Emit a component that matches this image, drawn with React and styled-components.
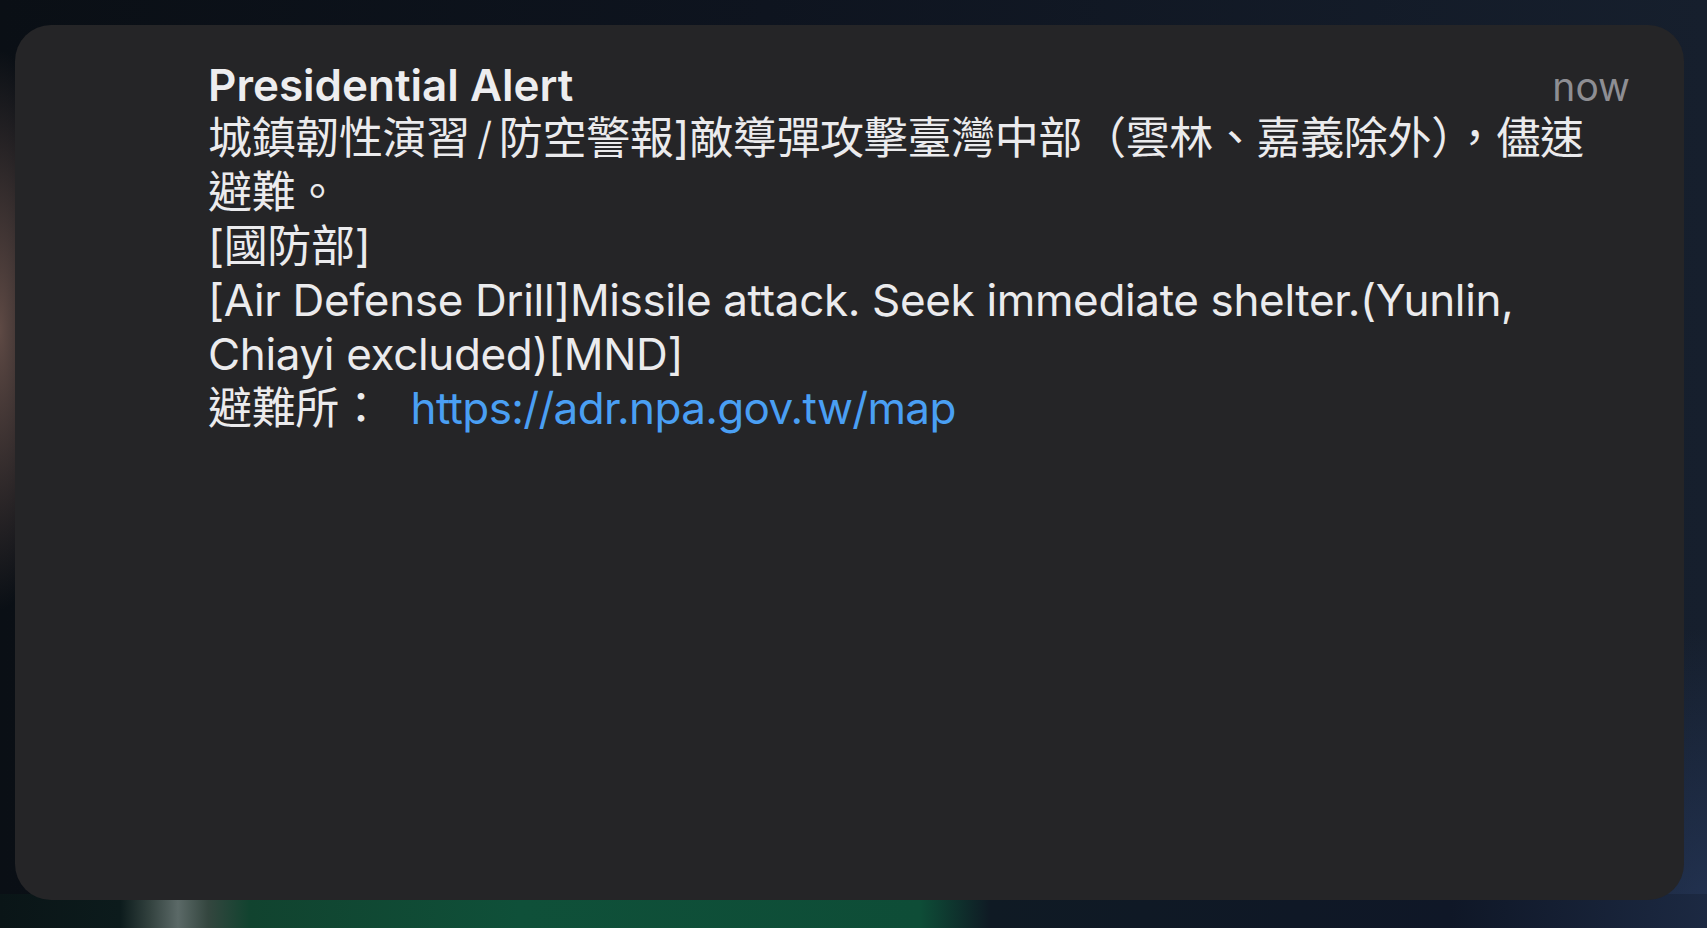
import React from 'react';
import styled, { createGlobalStyle } from 'styled-components';

const GlobalStyle = createGlobalStyle`
  html, body {
    margin: 0;
    padding: 0;
    height: 100%;
  }
  body {
    font-family: Inter, 'Noto Sans CJK TC', sans-serif;
    background-color: #0d131c;
    background-image:
      linear-gradient(90deg, #0a1517 0px, #0c1b1c 120px, #33423f 150px, #5b6967 178px, #34463f 208px, #11432f 250px, #0f5039 520px, #0e4d37 920px, #0f1a24 990px, #0f1727 1450px, #1c2942 1707px),
      radial-gradient(ellipse 60px 280px at 0px 330px, rgba(115, 88, 80, 0.8), rgba(115, 88, 80, 0) 100%),
      radial-gradient(ellipse 160px 300px at 1707px 928px, rgba(38, 56, 92, 0.8), rgba(38, 56, 92, 0) 100%),
      linear-gradient(90deg, #0a0f15 0%, #0e141f 45%, #161f2d 100%);
    background-size: 100% 34px, auto, auto, auto;
    background-position: left bottom, 0 0, 0 0, 0 0;
    background-repeat: no-repeat;
  }
`;

const Screen = styled.div`
  box-sizing: border-box;
  min-height: 100vh;
  display: flex;
  flex-direction: column;
  padding: 25px 23px 28px 15px;
`;

const Card = styled.section`
  flex: 1;
  display: flex;
  flex-direction: column;
  background: #252527;
  border-radius: 36px;
  padding: 34px 54px 0 193px;
  color: #ebebed;
`;

const Header = styled.header`
  display: flex;
  justify-content: space-between;
  align-items: baseline;
`;

const Title = styled.h1`
  margin: 0;
  font-size: 44px;
  line-height: 52px;
  font-weight: 600;
  letter-spacing: 0;
  color: #ededef;
`;

const Time = styled.span`
  font-size: 39px;
  font-weight: 400;
  color: #8e8e93;
`;

const Message = styled.div`
  max-width: 1412px;
  font-size: 44px;
  line-height: 54px;
  font-weight: 400;
  letter-spacing: -0.008em;
`;

const Line = styled.div`
  white-space: normal;
`;

const Slash = styled.span`
  margin: 0 7px;
  font-weight: 300;
`;

const Link = styled.a`
  color: #4a9ff3;
  text-decoration: none;
  margin-left: 28px;
  letter-spacing: -0.015em;
`;

export default function App() {
  return (
    <>
      <GlobalStyle />
      <Screen>
        <Card>
          <Header>
            <Title>Presidential Alert</Title>
            <Time>now</Time>
          </Header>
          <Message>
            <Line>
              城鎮韌性演習<Slash>/</Slash>防空警報]敵導彈攻擊臺灣中部（雲林、嘉義除外），儘速避難。
            </Line>
            <Line>[國防部]</Line>
            <Line>[Air Defense Drill]Missile attack. Seek immediate shelter.(Yunlin, Chiayi excluded)[MND]</Line>
            <Line>
              避難所：
              <Link href="https://adr.npa.gov.tw/map">https://adr.npa.gov.tw/map</Link>
            </Line>
          </Message>
        </Card>
      </Screen>
    </>
  );
}
